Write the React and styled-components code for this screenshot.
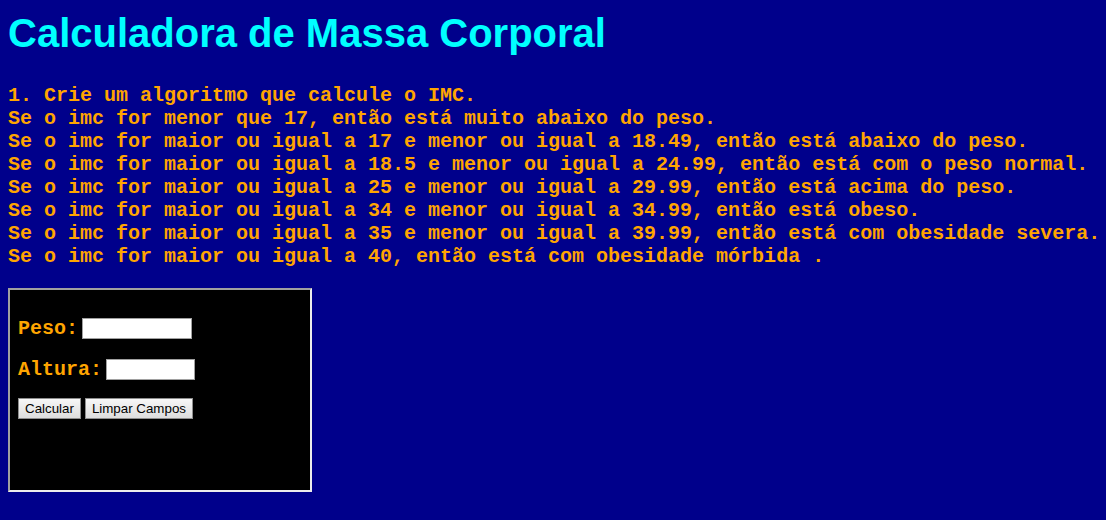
import React from 'react';
import styled, { createGlobalStyle } from 'styled-components';

const GlobalStyle = createGlobalStyle`
  html, body {
    margin: 0;
    padding: 0;
    background: #00008b;
  }
`;

const mono = `"Courier New", Courier, "Nimbus Mono PS", "Nimbus Mono L", FreeMono, "Liberation Mono", monospace`;

const Page = styled.div`
  padding: 8px;
  min-height: 504px;
  background: #00008b;
`;

const Title = styled.h1`
  margin: 3px 0 28px;
  font-family: "Liberation Sans", Arial, sans-serif;
  font-weight: bold;
  font-size: 40px;
  color: #00ffff;
`;

const Rules = styled.div`
  margin: 0 0 20px;
  font-family: ${ mono };
  font-weight: bold;
  font-size: 20px;
  color: #ffa500;
  white-space: pre;
`;

const Line = styled.div``;

const Panel = styled.div`
  width: 300px;
  height: 200px;
  background: #000;
  border: 2px solid;
  border-color: #a0a0a0 #ececec #ececec #a0a0a0;
`;

const Form = styled.form`
  display: flex;
  flex-direction: column;
  gap: 18px;
  padding: 27px 8px 8px;
`;

const Row = styled.div`
  display: flex;
  align-items: center;
  gap: 4px;
  height: 23px;
`;

const Label = styled.label`
  font-family: ${ mono };
  font-weight: bold;
  font-size: 20px;
  color: #ffa500;
  line-height: 23px;
`;

const Input = styled.input`
  box-sizing: border-box;
  width: ${ p => p.$w }px;
  height: 21px;
  border: 1px solid #a0a0a0;
  background: #fff;
  padding: 1px 2px;
  margin: 0;
  outline: none;
`;

const Buttons = styled.div`
  display: flex;
  gap: 4px;
  margin-top: -1px;
`;

const Button = styled.button`
  box-sizing: border-box;
  height: 21px;
  padding: 0 6px;
  margin: 0;
  border: 1px solid #8e8e8e;
  border-radius: 0;
  background: linear-gradient(#f7f7f7, #dddddd);
  font-family: "Liberation Sans", Arial, sans-serif;
  font-size: 13.33px;
  color: #000;
`;

const rules = [
  "1. Crie um algoritmo que calcule o IMC.",
  "Se o imc for menor que 17, então está muito abaixo do peso.",
  "Se o imc for maior ou igual a 17 e menor ou igual a 18.49, então está abaixo do peso.",
  "Se o imc for maior ou igual a 18.5 e menor ou igual a 24.99, então está com o peso normal.",
  "Se o imc for maior ou igual a 25 e menor ou igual a 29.99, então está acima do peso.",
  "Se o imc for maior ou igual a 34 e menor ou igual a 34.99, então está obeso.",
  "Se o imc for maior ou igual a 35 e menor ou igual a 39.99, então está com obesidade severa.",
  "Se o imc for maior ou igual a 40, então está com obesidade mórbida .",
];

export default function App() {
  return (
    <Page>
      <GlobalStyle />
      <Title>Calculadora de Massa Corporal</Title>

      <Rules>
        { rules.map( ( r, i ) => <Line key={ i }>{ r }</Line> ) }
      </Rules>

      <Panel>
        <Form onSubmit={ e => e.preventDefault() }>
          <Row>
            <Label htmlFor="peso">Peso:</Label>
            <Input id="peso" $w={ 110 } />
          </Row>
          <Row>
            <Label htmlFor="altura">Altura:</Label>
            <Input id="altura" $w={ 89 } />
          </Row>
          <Buttons>
            <Button type="button">Calcular</Button>
            <Button type="reset">Limpar Campos</Button>
          </Buttons>
        </Form>
      </Panel>
    </Page>
  );
}
